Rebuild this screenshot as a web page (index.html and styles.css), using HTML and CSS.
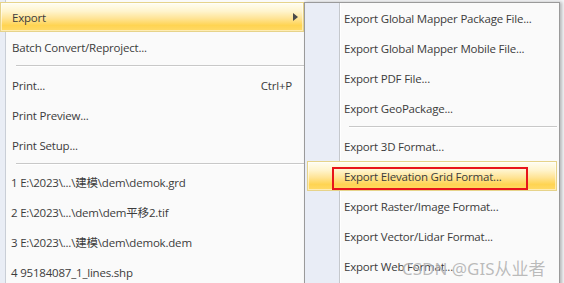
FILE: index.html
```
<!DOCTYPE html>
<html lang="en">
<head>
    <meta charset="UTF-8">
    <title>Export Menu</title>
    <link rel="stylesheet" href="styles.css">
</head>
<body>
    <div class="screen">
        <div class="menu">
            <div class="item active"><span>Export</span><span class="arrow"></span></div>
            <div class="item">Batch Convert/Reproject...</div>
            <div class="sep"></div>
            <div class="item"><span>Print...</span><span class="key">Ctrl+P</span></div>
            <div class="item">Print Preview...</div>
            <div class="item">Print Setup...</div>
            <div class="sep thin"></div>
            <div class="item recent">1 E:\2023\...\建模\dem\demok.grd</div>
            <div class="item recent">2 E:\2023\...\dem\dem平移2.tif</div>
            <div class="item recent">3 E:\2023\...\建模\dem\demok.dem</div>
            <div class="item recent">4 95184087_1_lines.shp</div>
        </div>

        <div class="submenu">
            <div class="item">Export Global Mapper Package File...</div>
            <div class="item">Export Global Mapper Mobile File...</div>
            <div class="item">Export PDF File...</div>
            <div class="item">Export GeoPackage...</div>
            <div class="sep"></div>
            <div class="item">Export 3D Format...</div>
            <div class="item active">Export Elevation Grid Format...<span class="mark"></span></div>
            <div class="item">Export Raster/Image Format...</div>
            <div class="item">Export Vector/Lidar Format...</div>
            <div class="item">Export Web Format...</div>
        </div>

        <div class="watermark">CSDN @GIS从业者</div>
    </div>
</body>
</html>
```

FILE: styles.css
```
body {
    margin: 0;
    background: #f4f5f7;
    font-family: "Open Sans", "Noto Sans CJK SC", sans-serif;
    font-size: 11.5px;
    letter-spacing: -0.2px;
    color: #3c3c3c;
}
.screen {
    position: relative;
    display: flex;
    align-items: flex-start;
    height: 283px;
    overflow: hidden;
}
.item {
    height: 30px;
    box-sizing: border-box;
    display: flex;
    align-items: center;
    justify-content: space-between;
    white-space: nowrap;
}
.active {
    border: 1px solid #e6d38a;
    background: linear-gradient(to bottom, #fffdf2 0%, #fff4cc 30%, #ffe496 55%, #ffd452 80%, #ffda68 100%);
    box-shadow: inset 0 0 0 1px rgba(255, 255, 255, 0.5);
}

/* main menu */
.menu {
    width: 304px;
    height: 283px;
    padding-top: 2px;
    box-sizing: border-box;
    background: linear-gradient(to right, #e9edf5 0 5px, #c9ced6 5px 6px, #fafafa 6px);
}
.menu .item {
    padding: 0 12px;
}
.menu .item.active {
    padding: 0 5px 0 11px;
}
.menu .recent {
    padding-left: 11px;
}
.arrow {
    width: 0;
    height: 0;
    border-left: 5px solid #4a4a4a;
    border-top: 4px solid transparent;
    border-bottom: 4px solid transparent;
}
.sep {
    height: 8px;
    margin-left: 16px;
    background: linear-gradient(to bottom, transparent 3px, #c8c8c8 3px 4px, #fff 4px 5px, transparent 5px);
}
.sep.thin {
    height: 7px;
}

/* submenu */
.submenu {
    position: relative;
    margin-top: 2px;
    width: 256px;
    height: 300px;
    box-sizing: border-box;
    padding: 0 2px;
    border: 1px solid #9a9a9a;
    background: linear-gradient(to right, #e9edf6 0 34px, #c5c8cc 34px 35px, #fff 35px 36px, #fafafa 36px);
    box-shadow: 2px 0 3px rgba(0, 0, 0, 0.25);
}
.submenu .item {
    padding-left: 37px;
    justify-content: flex-start;
}
.submenu .item.active {
    position: relative;
    padding-left: 36px;
}
.submenu .sep {
    margin-left: 42px;
}
.mark {
    position: absolute;
    left: 24px;
    top: 5px;
    width: 196px;
    height: 23px;
    box-sizing: border-box;
    border: 2px solid #e8141b;
}
.watermark {
    position: absolute;
    left: 402px;
    top: 255px;
    font-family: "Noto Sans", "Noto Sans CJK SC", sans-serif;
    font-size: 17px;
    letter-spacing: 0;
    color: rgba(120, 120, 120, 0.5);
    text-shadow: 0 0 1px rgba(255, 255, 255, 0.8);
    white-space: nowrap;
}
```
